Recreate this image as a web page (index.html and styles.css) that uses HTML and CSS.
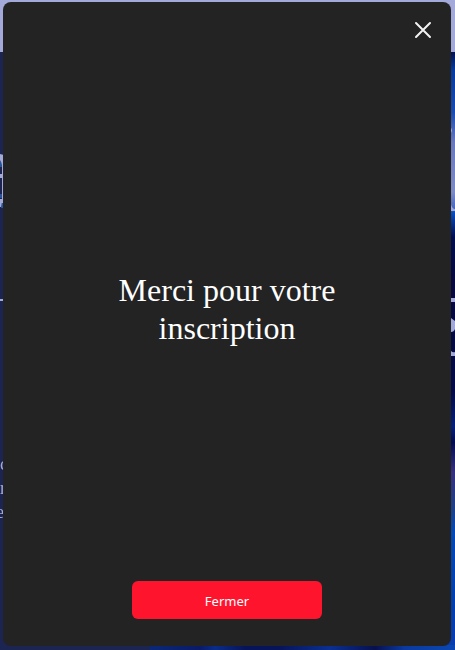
FILE: index.html
```html
<!DOCTYPE html>
<html lang="fr">
<head>
<meta charset="utf-8">
<meta name="viewport" content="width=device-width, initial-scale=1">
<title>Inscription</title>
<link rel="stylesheet" href="styles.css">
</head>
<body>
<div class="backdrop" aria-hidden="true">
  <div class="topbar"></div>
  <div class="hero">
    <div class="hero-edge">
      <svg width="4" height="398" viewBox="0 0 4 398">
        <path d="M0 102l4 1v48H2l-1 4H0v-8h2v-21H0v-4h2v-9L0 108z" fill="#a3a9d9"/>
        <path d="M1 110v5M1 142v4M2 151v5" stroke="#3b83db"/>
        <path d="M0 247h4v2H0z" fill="#a3a9d9"/>
      </svg>
      <p class="hero-copy">c<br>r<br><span class="trailing">e</span></p>
    </div>
    <div class="hero-photo">
      <svg width="4" height="398" viewBox="0 0 4 398">
        <path d="M0 76q2 2 0 5zM0 152q1 5 4 5v2H0zM0 246h4v4H0zM0 266l4 3v8q-1 3-4 3zM0 299q2 2 4 1v4H0z" fill="#a3a9d9"/>
      </svg>
    </div>
  </div>
</div>
<div class="overlay">
  <main class="modal" role="dialog" aria-modal="true" aria-labelledby="message">
    <button class="close" type="button" aria-label="Fermer la fenêtre">
      <svg viewBox="0 0 18 18" width="18" height="18" aria-hidden="true"><path d="M2 2l14 14M16 2L2 16" stroke="#f2f2f2" stroke-width="2" stroke-linecap="round"/></svg>
    </button>
    <h1 class="message" id="message">Merci pour votre inscription</h1>
    <button class="submit" type="button">Fermer</button>
  </main>
</div>
</body>
</html>
```
FILE: styles.css
```css
* { box-sizing: border-box; }
body { margin: 0; background: #1c2452; }
.backdrop {
  position: fixed;
  inset: 0;
  display: flex;
  flex-direction: column;
  overflow: hidden;
}
.topbar { height: 52px; background: #a3a9d9; }
.hero { flex: 1; display: flex; min-height: 0; }
.hero svg { display: block; }
.hero-edge { width: 150px; }
.hero-copy {
  margin: 0;
  padding-top: 2px;
  color: #a3a9d9;
  font: 18px/24px "Liberation Serif", serif;
}
.trailing { margin-left: -4px; }
.hero-photo {
  flex: 1;
  display: flex;
  justify-content: flex-end;
  background:
    linear-gradient(90deg, #0a2878, #0a1a68 50px, #0a2c8a 65px, #08145a 95px, #08145a 130px, #0a2f92 180px, #08104e 225px, #0a3aa0 255px, #0b46b0) bottom / 100% 5px no-repeat,
    linear-gradient(#03134f 0, #063a9e 18px, #1a4bb0 60px, #6878bd 90px, #7d8bc4 140px, #4565bd 157px, #0a4fc0 160px, #020e50 185px, #08093f 230px, #040b48 340px, #06207a 375px, #030c50 390px, #35307f 420px, #1f3f86 455px, #0449b5 480px, #033fae 550px, #0a3cb0 598px);
}
.overlay { position: relative; display: flex; min-height: 100vh; padding: 2px 4px 4px 3px; }
.modal {
  flex: 1;
  display: flex;
  flex-direction: column;
  align-items: center;
  padding: 16px 16px 27px;
  border-radius: 8px;
  background: #232323;
}
.close {
  display: flex;
  align-self: flex-end;
  padding: 3px;
  border: 0;
  background: none;
  cursor: pointer;
}
.message {
  max-width: 280px;
  margin: auto;
  padding-bottom: 6px;
  color: #fff;
  font: 400 32px/38px "Liberation Serif", serif;
  text-align: center;
}
.submit {
  width: 190px;
  height: 38px;
  padding: 2px 6px 0;
  border: 0;
  border-radius: 6px;
  background: #ff142d;
  color: #fff;
  font: 400 13px/20px "Noto Sans", "Open Sans", sans-serif;
  cursor: pointer;
}
```
